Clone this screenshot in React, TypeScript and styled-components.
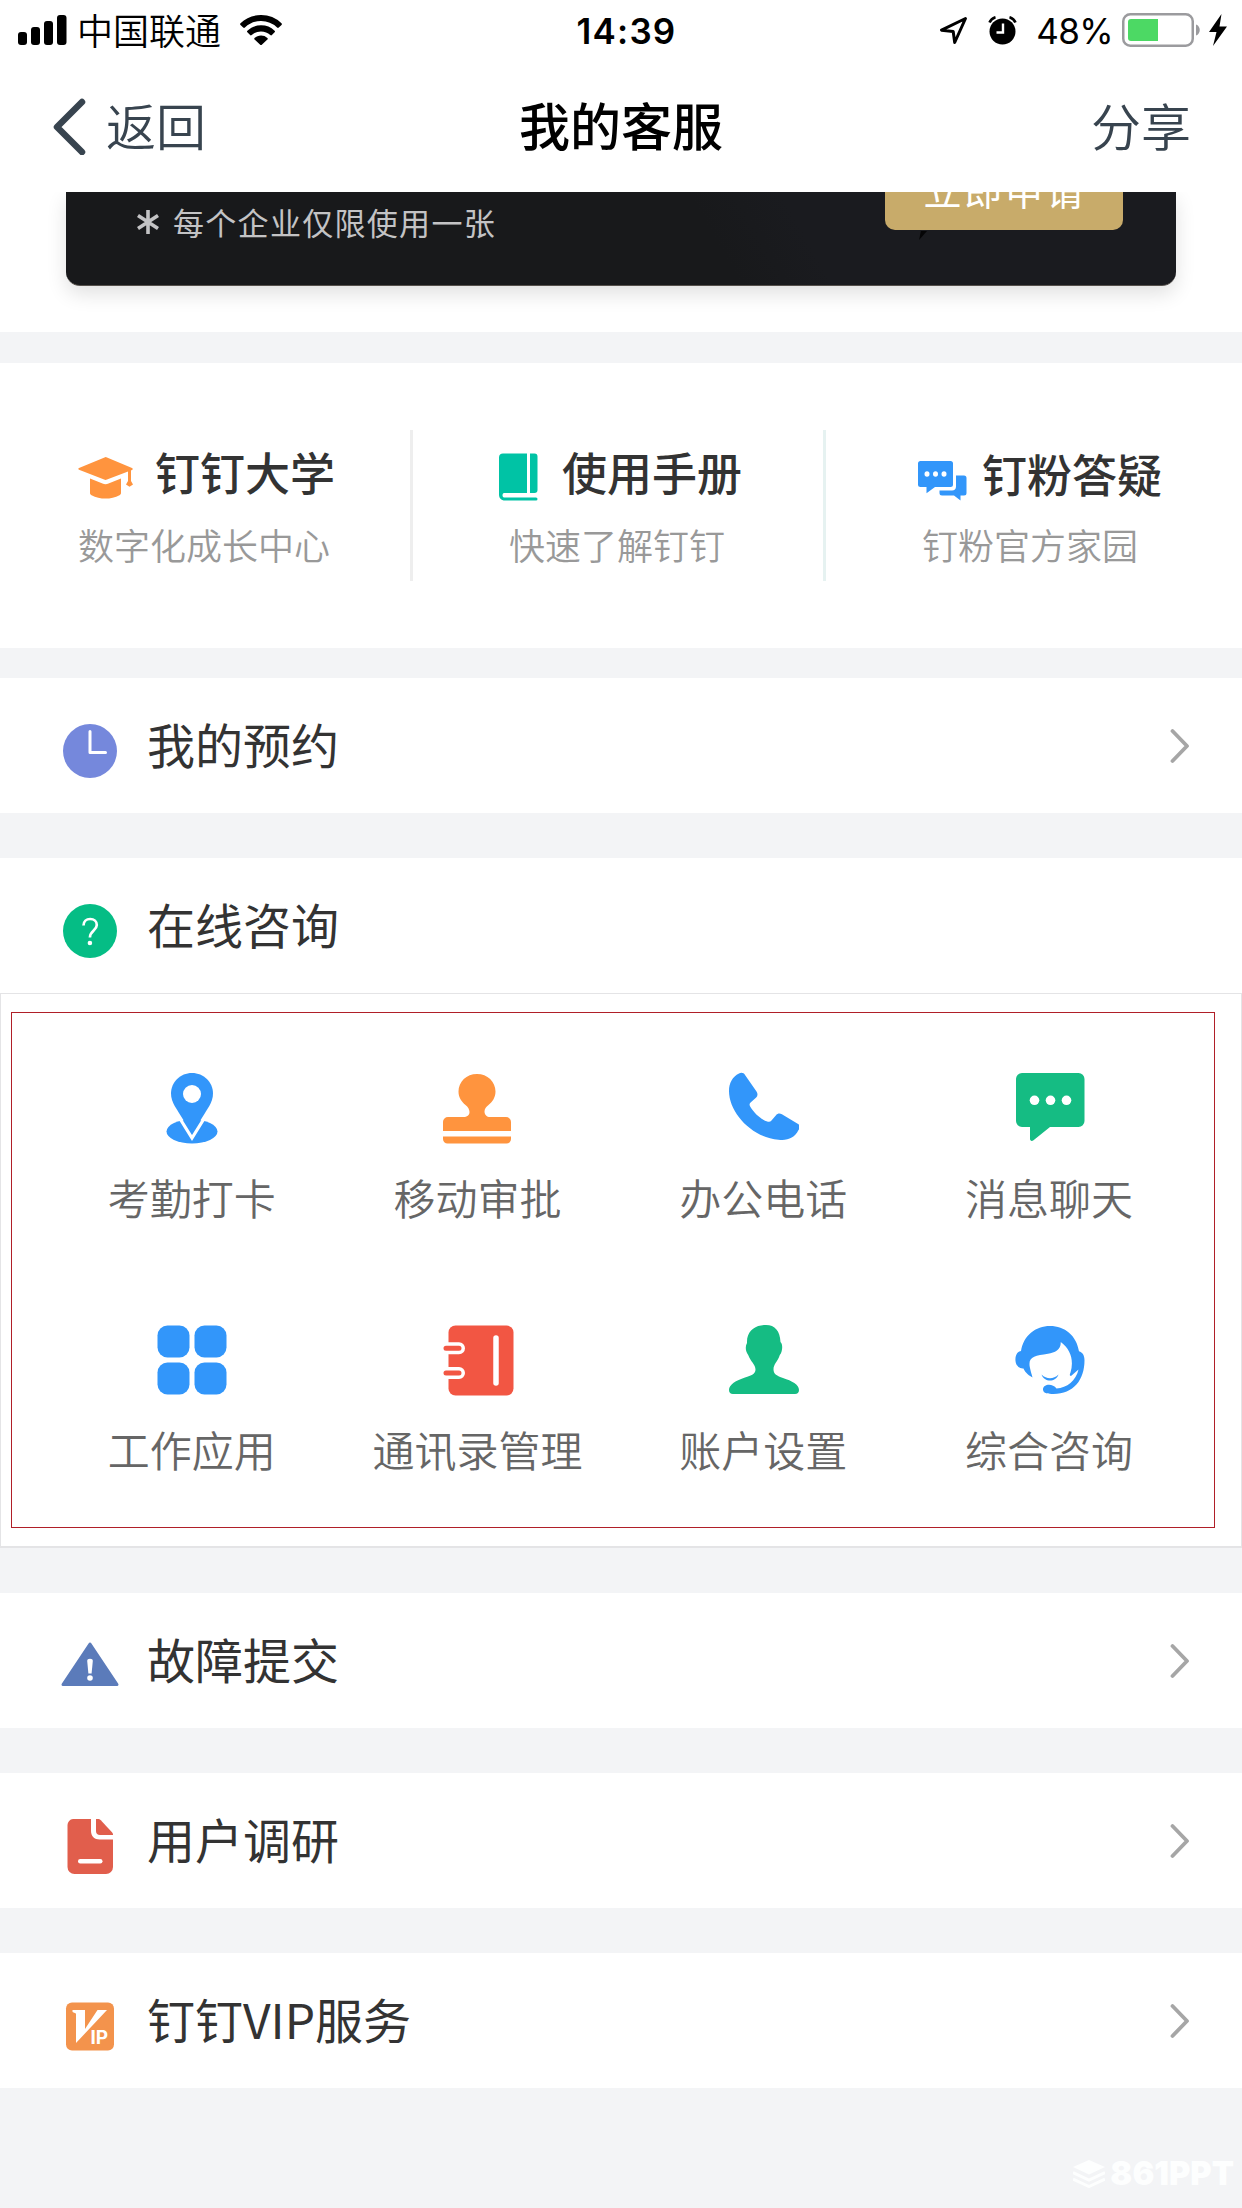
import React from "react";
import styled, { createGlobalStyle } from "styled-components";

const CJK = `"Noto Sans CJK SC", "Noto Sans", sans-serif`;
const BLUE = "#3296fa";
const GREEN = "#15bc83";
const ORANGE = "#ff943e";
const RED = "#f25643";

const GlobalStyle = createGlobalStyle`
  *, *::before, *::after { box-sizing: border-box; }
  body { margin: 0; background: #f3f4f6; font-family: ${CJK}; }
  svg { display: block; flex: none; }
`;

const Screen = styled.div`
  display: flex;
  flex-direction: column;
  width: 1242px;
  height: 2208px;
  overflow: hidden;
  background: #f3f4f6;
`;

/* Status bar */
const StatusBar = styled.header`
  display: grid;
  grid-template-columns: 1fr auto 1fr;
  align-items: center;
  height: 60px;
  padding: 0 15px 0 18px;
  background: #fff;
  color: #000;
`;
const StatusGroup = styled.div<{ $end?: boolean }>`
  display: flex;
  align-items: center;
  justify-content: ${(p) => (p.$end ? "flex-end" : "flex-start")};
`;
const Carrier = styled.span`
  margin: 0 19px 2px 10px;
  font-size: 36px;
  font-weight: 350;
  line-height: 56px;
`;
const Clock = styled.time`
  padding: 2px 0 0 8px;
  font: 600 35px/58px Inter, sans-serif;
  letter-spacing: 1.2px;
`;
const Percent = styled.span`
  margin: 0 9px 0 19px;
  padding-top: 2px;
  font: 400 35px/58px Inter, sans-serif;
  letter-spacing: -0.6px;
`;

/* Navigation bar */
const NavBar = styled.nav`
  display: grid;
  grid-template-columns: 1fr auto 1fr;
  align-items: center;
  height: 132px;
  padding: 0 51px 0 53px;
  background: #fff;
  color: #38444f;
  font-size: 50px;
  font-weight: 350;
  line-height: 127px;
`;
const BackButton = styled.a`
  display: flex;
  align-items: center;
  gap: 19px;

  span { padding-bottom: 4px; }
`;
const NavTitle = styled.h1`
  margin: 0 2px 4px 0;
  color: #000;
  font-size: 51px;
  font-weight: 500;
`;
const ShareButton = styled.a`
  justify-self: end;
  padding-bottom: 4px;
`;

/* Promotion card */
const PromoSection = styled.section`
  height: 140px;
  padding: 0 66px;
  overflow: hidden;
  background: #fff;
`;
const PromoCard = styled.div`
  display: flex;
  align-items: flex-start;
  justify-content: space-between;
  height: 94px;
  padding: 0 53px 0 70px;
  border-bottom: 1px solid #55504b;
  border-radius: 0 0 14px 14px;
  background: linear-gradient(60deg, #18191b 0 58%, #1a1b1f 66% 100%);
  box-shadow: 0 8px 20px rgba(0, 0, 0, 0.12);
`;
const PromoNote = styled.p`
  display: flex;
  align-items: center;
  gap: 13px;
  margin: 8px 0 0;
  color: #c3c3c5;
  font-size: 31px;
  letter-spacing: 1.3px;
  line-height: 44px;
`;
const ApplyArea = styled.div`
  display: flex;
  flex-direction: column;
`;
const ApplyButton = styled.div`
  display: flex;
  align-items: flex-end;
  justify-content: center;
  width: 238px;
  height: 38px;
  overflow: hidden;
  border-radius: 0 0 10px 10px;
  background: #c8ab6a;
  color: #fff;
  font-size: 38px;
  letter-spacing: 2.7px;
  line-height: 40px;
  padding: 0 0 21px 2px;
`;
const MarkSvg = styled.svg`
  margin: 1px 0 0 34px;
`;

/* Shortcut columns */
const Shortcuts = styled.section`
  display: grid;
  grid-template-columns: 413px 413px 1fr;
  height: 285px;
  margin-top: 31px;
  padding-top: 67px;
  background: #fff;
`;
const Shortcut = styled.div<{ $left: number; $line?: string }>`
  height: 151px;
  padding: 12px 0 0 ${(p) => p.$left}px;
  border-right: ${(p) => (p.$line ? `3px solid ${p.$line}` : "0")};
`;
const ShortcutHead = styled.div<{ $gap: number; $drop: number }>`
  display: flex;
  align-items: flex-start;
  gap: ${(p) => p.$gap}px;
  height: 72px;
  padding-top: ${(p) => p.$drop}px;
`;
const ShortcutTitle = styled.h2`
  margin: 0;
  color: #333;
  font-size: 45px;
  font-weight: 500;
  line-height: 60px;
`;
const ShortcutIcon = styled.span<{ $top: number }>`
  padding-top: ${(p) => p.$top}px;
`;
const ShortcutText = styled.p<{ $indent: number }>`
  margin: 0 0 0 ${(p) => p.$indent}px;
  color: #999;
  font-size: 36px;
  font-weight: 350;
  line-height: 60px;
`;

/* List rows */
const Row = styled.section<{ $top: number }>`
  display: flex;
  align-items: center;
  height: 135px;
  margin-top: ${(p) => p.$top}px;
  padding: 0 51px 0 60px;
  background: #fff;
`;
const RowIcon = styled.span`
  padding-top: 10px;
`;
const RowTitle = styled.h2`
  flex: 1;
  margin: 0 0 5px 27px;
  color: #333;
  font-size: 48px;
  font-weight: 400;
  line-height: 72px;
`;

/* Consultation topics */
const TopicPanel = styled.section`
  height: 555px;
  padding: 18px 26px 18px 10px;
  border: 1px solid #e4e4e6;
  border-bottom-width: 2px;
  background: #fff;
`;
const TopicGrid = styled.div`
  display: grid;
  grid-template-columns: repeat(4, 285.7px);
  grid-auto-rows: 252px;
  height: 516px;
  padding: 59px 0 0 37px;
  border: 1px solid #b01f28;
`;
const Topic = styled.div`
  display: flex;
  flex-direction: column;
  align-items: center;
`;
const TopicLabel = styled.span`
  margin-top: 23px;
  color: #666;
  font-size: 42px;
  font-weight: 350;
  line-height: 60px;
  white-space: nowrap;
`;

const Watermark = styled.footer`
  display: flex;
  align-items: center;
  justify-content: flex-end;
  gap: 5px;
  margin-top: 68px;
  padding-right: 8px;
  color: #fdfefe;
  font: 900 32.500px/36px Inter, sans-serif;
`;

const SignalIcon = () => (
  <svg width="49" height="30" viewBox="0 0 49 30">
    <rect x="0" y="17" width="9" height="13" rx="3" />
    <rect x="13" y="12" width="9" height="18" rx="3" />
    <rect x="26" y="6" width="9" height="24" rx="3" />
    <rect x="39" y="0" width="9.500" height="30" rx="3" />
  </svg>
);
const WifiIcon = () => (
  <svg width="42" height="30" viewBox="0 0 42 30">
    <path d="M21 0C13 0 5.800 3.100.5 8.200a1.200 1.200 0 0 0 0 1.700l2.700 2.700c.5.500 1.200.5 1.700 0A23 23 0 0 1 21 6.100a23 23 0 0 1 16.100 6.500c.5.500 1.200.5 1.700 0l2.700-2.700a1.200 1.200 0 0 0 0-1.700A29.500 29.500 0 0 0 21 0z" />
    <path d="M21 10.300c-5.300 0-10 2-13.600 5.400a1.100 1.100 0 0 0 0 1.600l2.700 2.800c.4.400 1.100.4 1.600 0A13.500 13.500 0 0 1 21 16.500c3.600 0 6.800 1.300 9.300 3.600.5.400 1.200.4 1.600 0l2.700-2.800a1.100 1.100 0 0 0 0-1.600A19.500 19.500 0 0 0 21 10.300z" />
    <path d="M21 20.500c-2.500 0-4.700.9-6.400 2.400a1 1 0 0 0 0 1.500l5.600 5.300a1.200 1.200 0 0 0 1.600 0l5.600-5.300a1 1 0 0 0 0-1.500 9.500 9.500 0 0 0-6.400-2.400z" />
  </svg>
);
const LocationIcon = () => (
  <svg width="29" height="29" viewBox="0 0 29 29">
    <path d="M26.500 2.500 2.500 14.200l11.700 1.300 1.500 11z" fill="none" stroke="#000" strokeWidth="3" strokeLinejoin="round" />
  </svg>
);
const AlarmSvg = styled.svg`
  margin-left: 20px;
`;
const AlarmIcon = () => (
  <AlarmSvg width="29" height="29" viewBox="0 0 29 29">
    <circle cx="14.500" cy="15.500" r="13" />
    <path d="M1.500 6.500A9 9 0 0 1 7.500 1.200M27.500 6.500a9 9 0 0 0-6-5.300" stroke="#000" strokeWidth="2.600" fill="none" />
    <path d="M15 7.500v9H8.500" stroke="#fff" strokeWidth="2.400" fill="none" />
  </AlarmSvg>
);
const BatteryIcon = () => (
  <svg width="79" height="34" viewBox="0 0 79 34">
    <rect x="1.250" y="1.250" width="69.500" height="31.500" rx="7" fill="none" stroke="#9b9b9e" strokeWidth="2.500" />
    <path d="M9 6h27v22H9a3 3 0 0 1-3-3V9a3 3 0 0 1 3-3z" fill="#4cd964" />
    <path d="M74 11.500c5 1.500 5 9.500 0 11z" fill="#9b9b9e" />
  </svg>
);
const BoltSvg = styled.svg`
  margin-left: 8px;
`;
const BoltIcon = () => (
  <BoltSvg width="18" height="32" viewBox="0 0 18 32">
    <path d="M12.500 0 0 18h7.500L4 32 18 12.500h-7.500z" />
  </BoltSvg>
);
const BackIcon = () => (
  <svg width="34" height="58" viewBox="0 0 34 58">
    <path d="M29 5 4 30l25 25" fill="none" stroke="#38444f" strokeWidth="6.500" strokeLinecap="round" strokeLinejoin="round" />
  </svg>
);
const AsteriskIcon = () => (
  <svg width="24" height="26" viewBox="0 0 24 26">
    <path d="M12 1v24M2 6.500l20 13M22 6.500l-20 13" stroke="#c3c3c5" strokeWidth="3.600" />
  </svg>
);
const CardMark = () => (
  <MarkSvg width="8" height="9" viewBox="0 0 8 9">
    <path d="M2 0h6L0 9z" fill="#050506" />
  </MarkSvg>
);
const CapIcon = () => (
  <svg width="56" height="43" viewBox="0 0 56 43" fill={ORANGE}>
    <path d="M26.500.4a3 3 0 0 1 2.500 0l25 10.700c1 .5 1 1.500 0 2L29 22.600a4 4 0 0 1-2.900 0L1 12.800c-1-.5-1-1.400 0-1.900z" />
    <path d="M12 21.500l12.500 5.100a8 8 0 0 0 6 0L43 21.500V36c0 1-.6 1.700-1.500 2.200-8.500 4.500-19.500 4.500-28 0-.9-.5-1.500-1.200-1.500-2.200z" />
    <path d="M50 13h3v11l2 3.500-3.500 2.200L48 27.500l2-3.500z" />
  </svg>
);
const BookIcon = () => (
  <svg width="39" height="48" viewBox="0 0 39 48" fill="#00c3a5">
    <path d="M4 .5h24V40H5c-2 0-2 4.500 0 4.500h32a1.500 1.500 0 0 1 0 3H6c-4 0-6-2.500-6-6v-37c0-2.400 1.500-4 4-4z" />
    <path d="M31 .5h4.500a3 3 0 0 1 3 3V37a3 3 0 0 1-3 3H31z" />
  </svg>
);
const ChatsIcon = () => (
  <svg width="49" height="40" viewBox="0 0 49 40" fill={BLUE}>
    <path d="M2.500 0h30A2.500 2.500 0 0 1 35 2.500v21a2.500 2.500 0 0 1-2.500 2.500H17l-8.500 6.300V26h-6A2.500 2.500 0 0 1 0 23.500v-21A2.500 2.500 0 0 1 2.500 0z" />
    <path d="M38 14.500h8a2.500 2.500 0 0 1 2.500 2.500v15a2.500 2.500 0 0 1-2.500 2.500h-3.500v5L36 34.500H24a2.500 2.500 0 0 1-2.500-2.500v-2.500H34c2.500 0 4-1.500 4-4z" />
    <g fill="#fff"><ellipse cx="9" cy="13" rx="2.500" ry="2.800" /><ellipse cx="17.500" cy="13" rx="2.500" ry="2.800" /><ellipse cx="26" cy="13" rx="2.500" ry="2.800" /></g>
  </svg>
);

const ClockIcon = () => (
  <svg width="60" height="60" viewBox="0 0 60 60">
    <circle cx="30" cy="30" r="27" fill="#7588dc" />
    <path d="M30 10.500V31.500H45.500" fill="none" stroke="#fff" strokeWidth="3" strokeLinecap="round" strokeLinejoin="round" />
  </svg>
);
const QuestionIcon = () => (
  <svg width="60" height="60" viewBox="0 0 60 60">
    <circle cx="30" cy="30" r="27" fill="#05bd85" />
    <path d="M23.500 24.500c0-4.200 2.900-6.500 6.700-6.500 3.900 0 6.600 2.500 6.600 6 0 5.500-6.900 5.500-6.900 12.500" fill="none" stroke="#fff" strokeWidth="2.700" />
    <circle cx="29.900" cy="42" r="2.300" fill="#fff" />
  </svg>
);
const WarningIcon = () => (
  <svg width="60" height="60" viewBox="0 0 60 60">
    <path d="M30 8 57 48.500h-54z" fill="#5b7bba" stroke="#5b7bba" strokeWidth="3" strokeLinejoin="round" />
    <path d="M27.200 25a2.800 2.300 0 0 1 5.600 0L31.600 37.500h-3.200z" fill="#fff" />
    <circle cx="30" cy="42" r="2.800" fill="#fff" />
  </svg>
);
const DocumentIcon = () => (
  <svg width="60" height="60" viewBox="0 0 60 60" fill="#e15e4c">
    <path d="M13 3h18v12c0 5.200 3.500 8.500 8.500 8.500H53V51a7 7 0 0 1-7 7H14.500a7 7 0 0 1-7-7V9A6 6 0 0 1 13 3z" />
    <path d="M36 3h2c1 0 2 .5 2.800 1.300L52.200 16.500c.7.900.8 1.500.8 2.500H40c-2.500 0-4-1.500-4-4z" />
    <rect x="18" y="43" width="24.500" height="4.500" rx="2.200" fill="#fff" />
  </svg>
);
const VipIcon = () => (
  <svg width="60" height="60" viewBox="0 0 60 60">
    <rect x="6" y="6.500" width="48" height="48" rx="6" fill="#f3934c" />
    <path d="M12.500 14H25v19L37.500 14H47L16 47V18c0-1.500-3.500-1-3.500-2.500z" fill="#fff" />
    <text x="30.500" y="47.500" fill="#fff" fontFamily="Inter, sans-serif" fontWeight="700" fontSize="19">IP</text>
  </svg>
);
const ChevronIcon = () => (
  <svg width="21" height="36" viewBox="0 0 21 36">
    <path d="M2.500 3l14.500 15L2.500 33" fill="none" stroke="#a6a6a6" strokeWidth="3.800" strokeLinecap="round" strokeLinejoin="round" />
  </svg>
);

const PinIcon = () => (
  <svg width="72" height="72" viewBox="0 0 72 72" fill={BLUE}>
    <ellipse cx="36" cy="59.500" rx="25.500" ry="12" />
    <path d="M36 1c11.700 0 21 9.200 21 20.500 0 4.500-1.500 8.700-3.700 12.500L36 62 18.700 34C16.500 30.200 15 26 15 21.500 15 10.200 24.300 1 36 1z" />
    <path d="M22 41.500 36 64l14-22.500" fill="none" stroke="#fff" strokeWidth="3.200" transform="translate(0 2)" />
    <circle cx="36" cy="22" r="9" fill="#fff" />
  </svg>
);
const StampIcon = () => (
  <svg width="72" height="72" viewBox="0 0 72 72" fill={ORANGE}>
    <path d="M35 2c10.500 0 18.500 7.800 18.500 17.500 0 6-3.200 10.500-7 13.500-2.500 2-4 4-4 6.500 0 3.500 2.500 5.500 5.500 5.500h16a5 5 0 0 1 5 5v9H1v-9a5 5 0 0 1 5-5h15.500c3.500 0 6-1.500 6-5 0-2.500-1.500-5-4-7-4-3.500-7-7.500-7-13.500C16.500 9.800 24.500 2 35 2z" />
    <path d="M1 64.500h68V67a4.500 4.500 0 0 1-4.500 4.500h-59A4.500 4.500 0 0 1 1 67z" />
  </svg>
);
const PhoneIcon = () => (
  <svg width="72" height="72" viewBox="-1 0 72 72" fill={BLUE}>
    <path d="M11 1.500c2.500-1.300 4.800-.5 6.200 1.700l11.300 16.300c1.500 2.200 1.200 4.300-.3 6l-5.600 5c-1.200 1.100-1.300 2.300-.6 3.800C26.500 42 33.500 47.800 40 49.700c1.500.4 2.500 0 3.500-1.200l4.700-5.500c1.500-1.700 3.500-2 5.700-.7l16.200 9.800c2.200 1.400 1.800 3.600.4 6C66.500 66 59.500 69 50.500 67.800 24 65.500 1 41 1 19 1 11 4.500 4.500 11 1.500z" />
  </svg>
);
const MessageIcon = () => (
  <svg width="72" height="72" viewBox="0 0 72 72" fill={GREEN}>
    <path d="M9 1h56.500a6 6 0 0 1 6 6v42a6 6 0 0 1-6 6H37L20.500 68.300c-1.700 1.300-3.500.7-3.500-1.500V55H9a6 6 0 0 1-6-6V7a6 6 0 0 1 6-6z" />
    <g fill="#fff"><circle cx="21.500" cy="28.300" r="4.800" /><circle cx="37.500" cy="28.300" r="4.800" /><circle cx="53.500" cy="28.300" r="4.800" /></g>
  </svg>
);
const AppsIcon = () => (
  <svg width="72" height="72" viewBox="0 0 72 72" fill={BLUE}>
    <rect x="1.500" y="1.500" width="32" height="32" rx="10" />
    <rect x="38.500" y="1.500" width="32" height="32" rx="10" />
    <rect x="1.500" y="38.500" width="32" height="32" rx="10" />
    <rect x="38.500" y="38.500" width="32" height="32" rx="10" />
  </svg>
);
const ContactsIcon = () => (
  <svg width="72" height="72" viewBox="0 0 72 72" fill={RED}>
    <rect x="6.500" y="1.500" width="65" height="70" rx="7" />
    <path d="M4 24.200h13M4 49h13" stroke="#fff" strokeWidth="12" strokeLinecap="round" />
    <path d="M4 24.200h13M4 49h13" stroke={RED} strokeWidth="5" strokeLinecap="round" />
    <path d="M54 14v45" stroke="#fff" strokeWidth="5.500" strokeLinecap="round" />
  </svg>
);
const UserIcon = () => (
  <svg width="72" height="72" viewBox="-1 0 72 72" fill={GREEN}>
    <path d="M33 1.500C45 -1 52 5 52.500 18c2.500 2 2.200 9.500-.7 13-2.300 7-6.300 9-6.300 14.500 0 4.500 3.500 6.500 9.500 8.500C64 57 71 60.500 71 66c0 2.500-1.500 4-4 4H5c-2.500 0-4-1.500-4-4 0-5.500 7-9.500 16-12.500 6.500-2 10.500-3.500 10.500-8 0-5-5-8-7.300-14.500-2.700-3.500-3.200-8.500-1.200-12C18.500 9 25 2.500 33 1.500z" />
  </svg>
);
const SupportIcon = () => (
  <svg width="72" height="72" viewBox="0 0 72 72" fill={BLUE}>
    <path d="M19.500 53.500C14 50.500 11.500 47 10.500 44.500 6 45 3 41.500 2.500 37c-.5-5 1-9 5.500-10C10.500 11.500 22.500 2 37 2c14.700 0 26.500 9.500 29 25.300 3.500 1.200 5.500 4 5.500 9C71.500 56 60.500 70 40.500 70c-5 0-10.500-.5-10.500-4.500 0-5.500 9.500-6.500 13.500-1C54 64 63 56.500 65.500 45.500L58 52c-2-.5-1-2-.5-3.500C61 37 58 25.500 47.800 18c0 8.500-6 10.500-12.800 11.700-14 2-20.500 3.300-18 14.300.8 4 1.800 6.500 2.500 9.500z" />
    <path d="M28.500 50.500c5 5 12 5 17 0-3 8-14 8-17 0z" />
  </svg>
);
const LayersIcon = () => (
  <svg width="32" height="28" viewBox="0 0 32 28" fill="#fdfefe">
    <path d="M16 0l16 7-16 7.500L0 7z" />
    <path d="M0 12.500l16 7.500 16-7.500M0 19l16 7.500L32 19" fill="none" stroke="#fdfefe" strokeWidth="3" />
  </svg>
);

const topics = [
  { label: "考勤打卡", icon: <PinIcon /> },
  { label: "移动审批", icon: <StampIcon /> },
  { label: "办公电话", icon: <PhoneIcon /> },
  { label: "消息聊天", icon: <MessageIcon /> },
  { label: "工作应用", icon: <AppsIcon /> },
  { label: "通讯录管理", icon: <ContactsIcon /> },
  { label: "账户设置", icon: <UserIcon /> },
  { label: "综合咨询", icon: <SupportIcon /> },
];

type ListRowProps = { icon: React.ReactNode; title: string; top?: number; link?: boolean };
const ListRow = ({ icon, title, top = 45, link = true }: ListRowProps) => (
  <Row $top={top}>
    <RowIcon>{icon}</RowIcon>
    <RowTitle>{title}</RowTitle>
    {link && <ChevronIcon />}
  </Row>
);

export default function App() {
  return (
    <Screen>
      <GlobalStyle />
      <StatusBar>
        <StatusGroup>
          <SignalIcon />
          <Carrier>中国联通</Carrier>
          <WifiIcon />
        </StatusGroup>
        <Clock>14:39</Clock>
        <StatusGroup $end>
          <LocationIcon />
          <AlarmIcon />
          <Percent>48%</Percent>
          <BatteryIcon />
          <BoltIcon />
        </StatusGroup>
      </StatusBar>
      <NavBar>
        <BackButton>
          <BackIcon />
          <span>返回</span>
        </BackButton>
        <NavTitle>我的客服</NavTitle>
        <ShareButton>分享</ShareButton>
      </NavBar>
      <PromoSection>
        <PromoCard>
          <PromoNote>
            <AsteriskIcon />
            每个企业仅限使用一张
          </PromoNote>
          <ApplyArea>
            <ApplyButton>立即申请</ApplyButton>
            <CardMark />
          </ApplyArea>
        </PromoCard>
      </PromoSection>
      <Shortcuts>
        <Shortcut $left={78} $line="#eeeeee">
          <ShortcutHead $gap={21} $drop={0}>
            <ShortcutIcon $top={15}><CapIcon /></ShortcutIcon>
            <ShortcutTitle>钉钉大学</ShortcutTitle>
          </ShortcutHead>
          <ShortcutText $indent={0}>数字化成长中心</ShortcutText>
        </Shortcut>
        <Shortcut $left={86} $line="#e6f2f1">
          <ShortcutHead $gap={24} $drop={0}>
            <ShortcutIcon $top={11}><BookIcon /></ShortcutIcon>
            <ShortcutTitle>使用手册</ShortcutTitle>
          </ShortcutHead>
          <ShortcutText $indent={10}>快速了解钉钉</ShortcutText>
        </Shortcut>
        <Shortcut $left={92}>
          <ShortcutHead $gap={15} $drop={2}>
            <ShortcutIcon $top={17}><ChatsIcon /></ShortcutIcon>
            <ShortcutTitle>钉粉答疑</ShortcutTitle>
          </ShortcutHead>
          <ShortcutText $indent={4}>钉粉官方家园</ShortcutText>
        </Shortcut>
      </Shortcuts>
      <ListRow icon={<ClockIcon />} title="我的预约" top={30} />
      <ListRow icon={<QuestionIcon />} title="在线咨询" link={false} />
      <TopicPanel>
        <TopicGrid>
          {topics.map((t) => (
            <Topic key={t.label}>
              {t.icon}
              <TopicLabel>{t.label}</TopicLabel>
            </Topic>
          ))}
        </TopicGrid>
      </TopicPanel>
      <ListRow icon={<WarningIcon />} title="故障提交" />
      <ListRow icon={<DocumentIcon />} title="用户调研" />
      <ListRow icon={<VipIcon />} title="钉钉VIP服务" />
      <Watermark>
        <LayersIcon />
        861PPT
      </Watermark>
    </Screen>
  );
}
